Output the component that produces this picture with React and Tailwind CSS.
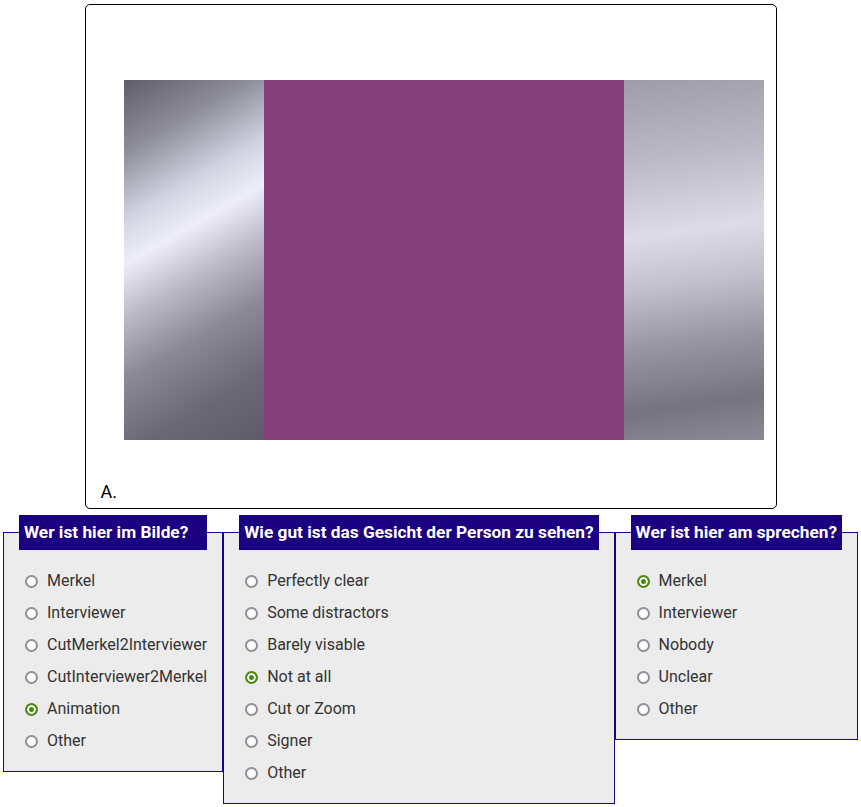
import React, { useState } from 'react';

const questions = [
  {
    id: 'who',
    title: 'Wer ist hier im Bilde?',
    options: ['Merkel', 'Interviewer', 'CutMerkel2Interviewer', 'CutInterviewer2Merkel', 'Animation', 'Other'],
    initial: 'Animation',
  },
  {
    id: 'face',
    title: 'Wie gut ist das Gesicht der Person zu sehen?',
    options: ['Perfectly clear', 'Some distractors', 'Barely visable', 'Not at all', 'Cut or Zoom', 'Signer', 'Other'],
    initial: 'Not at all',
  },
  {
    id: 'speaker',
    title: 'Wer ist hier am sprechen?',
    options: ['Merkel', 'Interviewer', 'Nobody', 'Unclear', 'Other'],
    initial: 'Merkel',
  },
];

const Question = ({ q, value, onChange }) => (
  <fieldset className="m-0 border border-[#1a0096] bg-[#ececec] px-[15px] pb-[14px]">
    <legend className="block w-full bg-[#1b0082] px-[5px] py-[7px] text-[17.3px] font-bold leading-[21px] text-white">
      {q.title}
    </legend>
    <div className="mt-[15px] flex flex-col">
      {q.options.map((opt) => (
        <label key={opt} className="flex h-[32px] items-center text-[16px] text-[#333]">
          <input
            type="radio"
            name={q.id}
            value={opt}
            checked={value === opt}
            onChange={() => onChange(opt)}
            className="m-0 ml-[6px] mr-[9px] h-[13px] w-[13px] appearance-none rounded-full border-2 border-[#8f8e99] bg-white checked:border-[#4b8a10] checked:bg-[#4b8a10] checked:shadow-[inset_0_0_0_2px_white]"
          />
          {opt}
        </label>
      ))}
    </div>
  </fieldset>
);

const App = () => {
  const [answers, setAnswers] = useState(
    Object.fromEntries(questions.map((q) => [q.id, q.initial]))
  );

  return (
    <div className="min-h-screen bg-white font-['Roboto',sans-serif]">
      {/* video card */}
      <div className="mx-auto mt-[4px] w-[692px] rounded-[5px] border border-black pl-[38px] pt-[75px] pb-[3px]">
        <div className="flex h-[360px] w-[640px]">
          <div className="w-[140px] bg-[linear-gradient(150deg,#5f5d6a_0%,#8c8b98_16%,#d4d3e2_32%,#eeeefa_42%,#bbbac6_54%,#8a8995_68%,#6a6874_85%,#5e5c68_100%)]" />
          <div className="w-[360px] bg-[#843f79]" />
          <div className="w-[140px] bg-[linear-gradient(172deg,#9d9ca8_0%,#bab9c5_22%,#dcdce6_42%,#c4c3cd_55%,#96959f_72%,#76757f_88%,#8a8994_100%)]" />
        </div>
        <div className="-ml-[23px] mt-[38px] text-[18px] leading-[27px] text-black">A.</div>
      </div>

      {/* questions */}
      <div className="mt-[6px] flex items-start pl-[3px]">
        {questions.map((q) => (
          <Question
            key={q.id}
            q={q}
            value={answers[q.id]}
            onChange={(v) => setAnswers((a) => ({ ...a, [q.id]: v }))}
          />
        ))}
      </div>
    </div>
  );
};

export default App;
